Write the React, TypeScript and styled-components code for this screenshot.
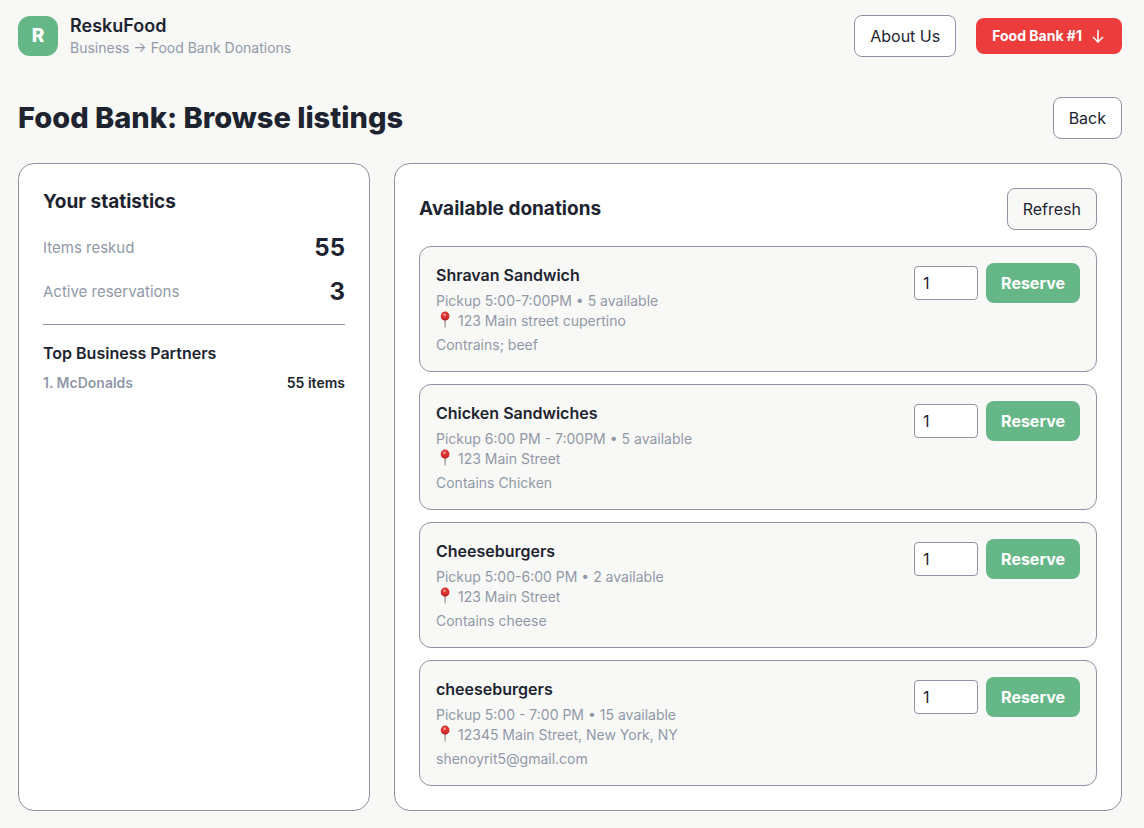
import React from "react";
import styled, { createGlobalStyle, css } from "styled-components";

const color = {
  page: "#f8f8f6",
  surface: "#ffffff",
  ink: "#1d2430",
  muted: "#9198a7",
  line: "#8d93a3",
  green: "#66b788",
  red: "#ed3c3c",
};

const GlobalStyle = createGlobalStyle`
  *, *::before, *::after { box-sizing: border-box; }
  body {
    margin: 0;
    background: ${color.page};
    color: ${color.ink};
    font-family: Inter, "Liberation Sans", sans-serif;
    font-size: 16px;
    line-height: 24px;
  }
  h1, h2, h3, p, ol, ul, dl, dd { margin: 0; padding: 0; }
  ol, ul { list-style: none; }
  button, input { font: inherit; color: inherit; }
  button { cursor: pointer; }
`;

const Page = styled.div`
  min-height: 100vh;
  display: flex;
  flex-direction: column;
  padding: 0 22px 17px 18px;
`;

const Header = styled.header`
  display: flex;
  align-items: center;
  justify-content: space-between;
  min-height: 72px;
`;

const Brand = styled.div`
  display: flex;
  align-items: center;
  gap: 12px;
`;

const Logo = styled.div`
  display: grid;
  place-items: center;
  width: 40px;
  height: 40px;
  border-radius: 12px;
  background: ${color.green};
  color: #fff;
  font-size: 19px;
  font-weight: 800;
`;

const BrandName = styled.div`
  font-size: 18px;
  line-height: 24px;
  font-weight: 600;
`;

const Muted = styled.p`
  font-size: 14px;
  line-height: 20px;
  color: ${color.muted};
`;

const Actions = styled.nav`
  display: flex;
  align-items: center;
  gap: 20px;
`;

const OutlineButton = styled.button<{ $tinted?: boolean }>`
  padding: 8px 15px;
  border: 1px solid ${color.line};
  border-radius: 8px;
  background: ${(p) => (p.$tinted ? color.page : color.surface)};
`;

const SolidButton = styled.button<{ $tone: "green" | "red" }>`
  display: flex;
  align-items: center;
  gap: 8px;
  padding: 8px 15px;
  border: 0;
  border-radius: 8px;
  background: ${(p) => color[p.$tone]};
  color: #fff;
  font-weight: 700;
  ${(p) =>
    p.$tone === "red" &&
    css`
      padding: 8px 16px;
      font-size: 14px;
      line-height: 20px;
    `}
`;

const ArrowDown = styled.svg`
  width: 16px;
  height: 16px;
`;

const Main = styled.main`
  flex: 1;
  display: flex;
  flex-direction: column;
  gap: 24px;
  padding-top: 25px;
`;

const TitleRow = styled.div`
  display: flex;
  align-items: center;
  justify-content: space-between;
`;

const Title = styled.h1`
  font-size: 29px;
  line-height: 36px;
  font-weight: 800;
`;

const Columns = styled.div`
  flex: 1;
  display: grid;
  grid-template-columns: repeat(3, minmax(0, 1fr));
  gap: 24px;
`;

const Panel = styled.section<{ $span?: number }>`
  grid-column: span ${(p) => p.$span ?? 1};
  padding: 24px;
  border: 1px solid ${color.line};
  border-radius: 16px;
  background: ${color.surface};
`;

const PanelTitle = styled.h2`
  font-size: 19px;
  line-height: 28px;
  font-weight: 700;
`;

const Stats = styled.dl`
  display: flex;
  flex-direction: column;
  gap: 12px;
  padding: 16px 0;
  border-bottom: 1px solid ${color.line};
`;

const Stat = styled.div`
  display: flex;
  align-items: center;
  justify-content: space-between;
`;

const StatLabel = styled.dt`
  font-size: 15px;
  color: ${color.muted};
`;

const StatValue = styled.dd`
  font-size: 24px;
  line-height: 32px;
  font-weight: 700;
`;

const SubTitle = styled.h3<{ $top?: boolean }>`
  font-size: 16px;
  line-height: 24px;
  font-weight: 600;
  padding-top: ${(p) => (p.$top ? 16 : 0)}px;
`;

const Partner = styled.li`
  display: flex;
  justify-content: space-between;
  margin-top: 8px;
  font-size: 14px;
  line-height: 20px;
  font-weight: 600;
`;

const PartnerName = styled.span`
  color: ${color.muted};
`;

const List = styled.ul`
  display: flex;
  flex-direction: column;
  gap: 12px;
  margin-top: 16px;
`;

const Card = styled.li`
  display: flex;
  align-items: flex-start;
  justify-content: space-between;
  padding: 16px;
  border: 1px solid ${color.line};
  border-radius: 12px;
  background: ${color.page};
`;

const Details = styled.div`
  display: flex;
  flex-direction: column;
  gap: 4px;
`;

const Address = styled.span`
  display: flex;
  align-items: center;
`;

const Pin = styled.svg`
  width: 18px;
  height: 20px;
  margin-right: 4px;
`;

const Reserve = styled.form`
  display: flex;
  align-items: center;
  gap: 8px;
`;

const Quantity = styled.input`
  width: 64px;
  height: 34px;
  padding: 4px 8px;
  border: 1px solid ${color.line};
  border-radius: 4px;
  background: ${color.surface};
  appearance: textfield;
`;

const donations = [
  { name: "Shravan Sandwich", pickup: "5:00-7:00PM", left: 5, address: "123 Main street cupertino", note: "Contrains; beef" },
  { name: "Chicken Sandwiches", pickup: "6:00 PM - 7:00PM", left: 5, address: "123 Main Street", note: "Contains Chicken" },
  { name: "Cheeseburgers", pickup: "5:00-6:00 PM", left: 2, address: "123 Main Street", note: "Contains cheese" },
  { name: "cheeseburgers", pickup: "5:00 - 7:00 PM", left: 15, address: "12345 Main Street, New York, NY", note: "shenoyrit5@gmail.com" },
];

function PinIcon() {
  return (
    <Pin viewBox="0 0 18 20" aria-hidden="true">
      <path d="M8.4 8h1.4l-.3 8.2-.4.8-.4-.8z" fill="#8c7b76" />
      <circle cx="9.1" cy="5" r="4.4" fill="#d9322f" />
      <path d="M5 6.4a4.4 4.4 0 0 0 8.2 0c-2 1.9-6.2 1.9-8.2 0z" fill="#b81f22" />
      <circle cx="8.5" cy="3.8" r="1.5" fill="#f58a80" />
    </Pin>
  );
}

export default function App() {
  return (
    <>
      <GlobalStyle />
      <Page>
        <Header>
          <Brand>
            <Logo>R</Logo>
            <div>
              <BrandName>ReskuFood</BrandName>
              <Muted>Business → Food Bank Donations</Muted>
            </div>
          </Brand>
          <Actions>
            <OutlineButton type="button">About Us</OutlineButton>
            <SolidButton type="button" $tone="red">
              Food Bank #1
              <ArrowDown viewBox="0 0 16 16" fill="none" stroke="currentColor" strokeWidth="1.5" aria-hidden="true">
                <path d="M8 2v12M3 9l5 5 5-5" />
              </ArrowDown>
            </SolidButton>
          </Actions>
        </Header>
        <Main>
          <TitleRow>
            <Title>Food Bank: Browse listings</Title>
            <OutlineButton type="button">Back</OutlineButton>
          </TitleRow>
          <Columns>
            <Panel>
              <PanelTitle>Your statistics</PanelTitle>
              <Stats>
                <Stat>
                  <StatLabel>Items reskud</StatLabel>
                  <StatValue>55</StatValue>
                </Stat>
                <Stat>
                  <StatLabel>Active reservations</StatLabel>
                  <StatValue>3</StatValue>
                </Stat>
              </Stats>
              <SubTitle $top>Top Business Partners</SubTitle>
              <ol>
                <Partner>
                  <PartnerName>1. McDonalds</PartnerName>
                  <span>55 items</span>
                </Partner>
              </ol>
            </Panel>
            <Panel $span={2}>
              <TitleRow>
                <PanelTitle>Available donations</PanelTitle>
                <OutlineButton type="button" $tinted>Refresh</OutlineButton>
              </TitleRow>
              <List>
                {donations.map((d) => (
                  <Card key={d.name}>
                    <Details>
                      <SubTitle>{d.name}</SubTitle>
                      <Muted as="div">
                        Pickup {d.pickup} • {d.left} available
                        <Address>
                          <PinIcon />
                          {d.address}
                        </Address>
                      </Muted>
                      <Muted>{d.note}</Muted>
                    </Details>
                    <Reserve onSubmit={(e) => e.preventDefault()}>
                      <Quantity type="number" min={1} max={d.left} defaultValue={1} aria-label={`Quantity of ${d.name}`} />
                      <SolidButton type="submit" $tone="green">Reserve</SolidButton>
                    </Reserve>
                  </Card>
                ))}
              </List>
            </Panel>
          </Columns>
        </Main>
      </Page>
    </>
  );
}
